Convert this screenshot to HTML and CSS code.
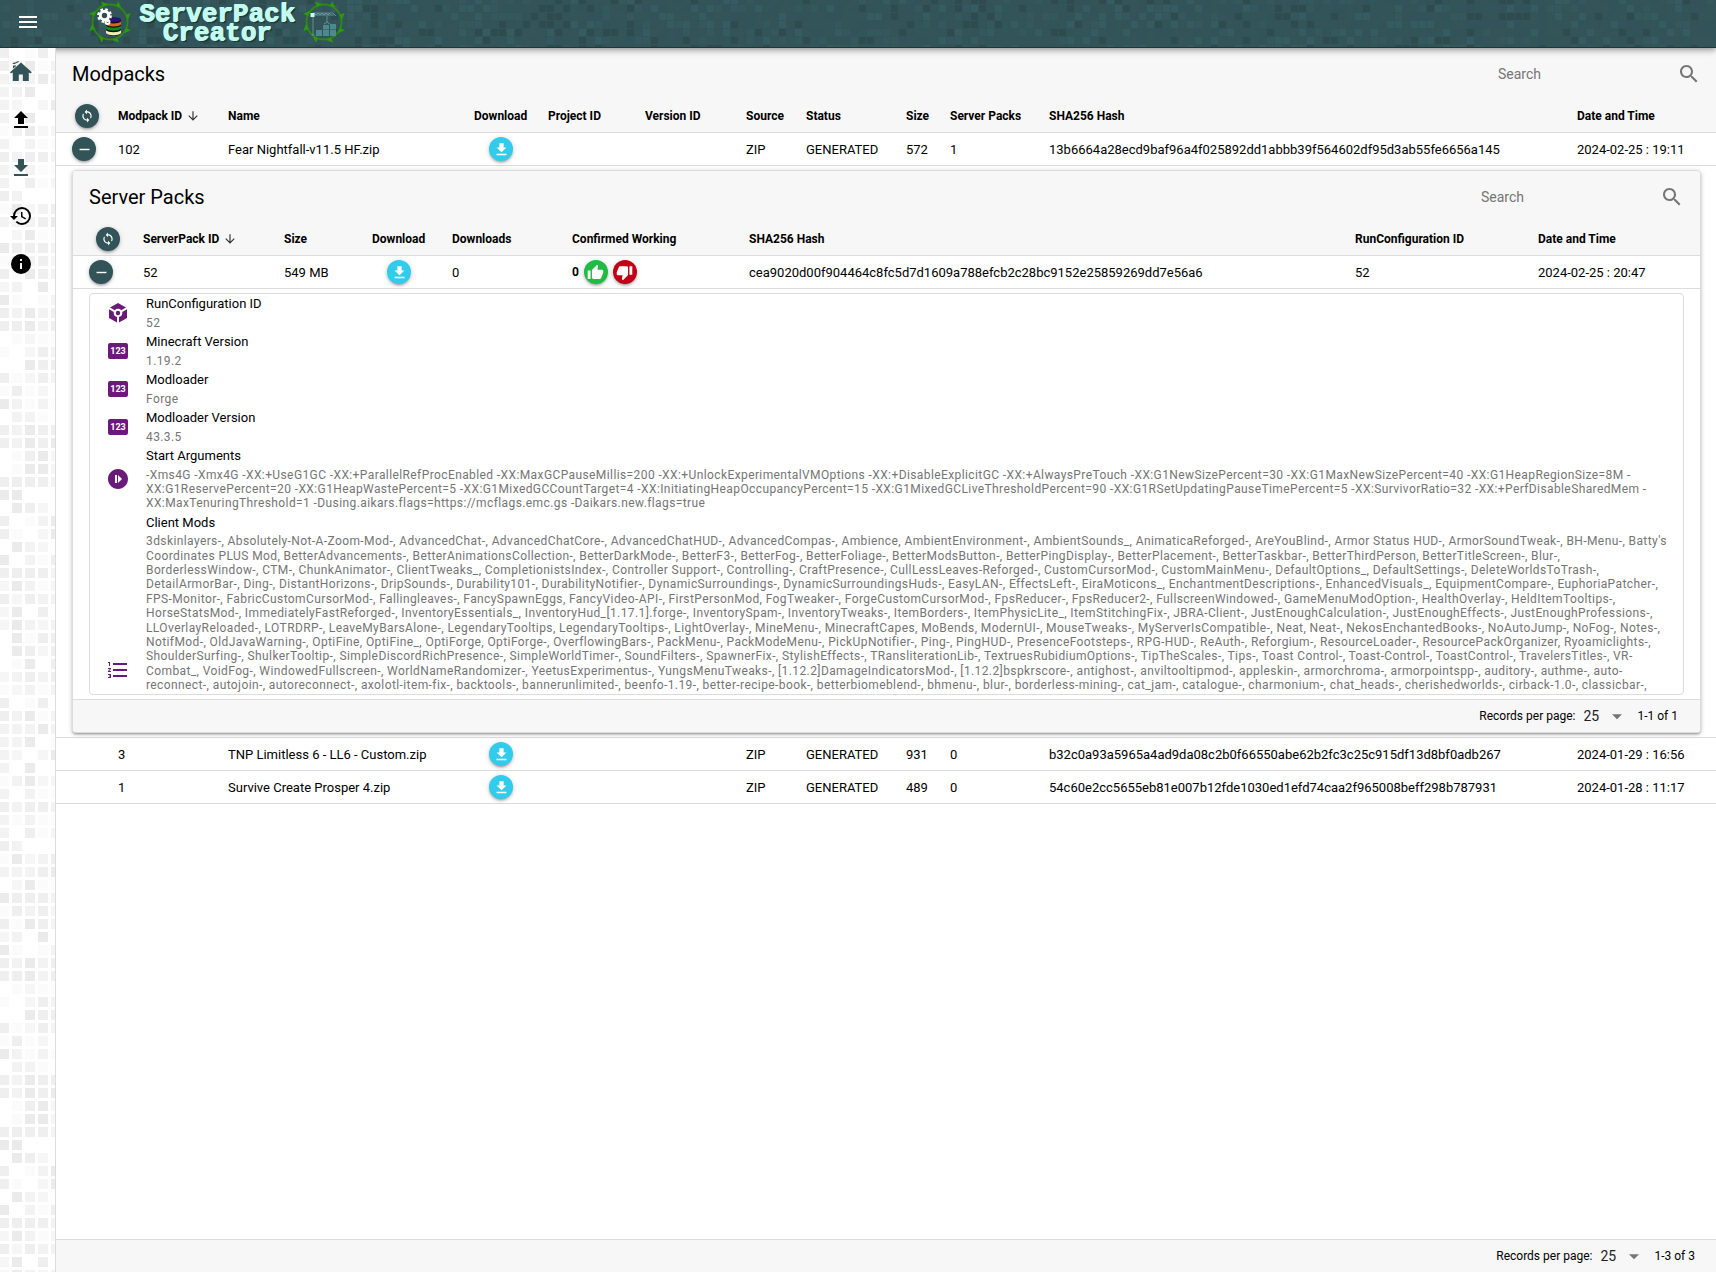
FILE: index.html
```html
<!DOCTYPE html>
<html lang="en">
<head>
<meta charset="utf-8">
<meta name="viewport" content="width=device-width, initial-scale=1">
<title>ServerPackCreator</title>
<link rel="stylesheet" href="styles.css">
<script src="pixels.js" defer></script>
</head>
<body>
<svg class="sprite" aria-hidden="true">
  <symbol id="i-menu" viewBox="0 0 24 24"><path d="M3 18h18v-2H3v2zm0-5h18v-2H3v2zm0-7v2h18V6H3z"/></symbol>
  <symbol id="i-home" viewBox="0 0 24 24"><path d="M12 2.500 1 12.200l1 1.200 1.800-.9V21h6v-6.500h4V21h6v-8.500l1.800.9 1.200-1.200z"/><path d="M4 5.500V8.500l3-2.300V5.500zM3.600 4C4 2.200 5.600 3 7 2.200 8 1.500 9 1 10 1 9.600 3 8 2.600 7 3.200 6 4 4.600 4 3.600 4z"/></symbol>
  <symbol id="i-upload" viewBox="0 0 24 24"><path d="M9 16v-6H5l7-7 7 7h-4v6H9zm-4 4v-2h14v2H5z"/></symbol>
  <symbol id="i-download" viewBox="0 0 24 24"><path d="M19 9h-4V3H9v6H5l7 7 7-7zM5 18v2h14v-2H5z"/></symbol>
  <symbol id="i-history" viewBox="0 0 24 24"><path d="M13.500 8H12v5l4.280 2.540.72-1.210-3.500-2.080V8M13 3a9 9 0 0 0-9 9H1l3.960 4.030L9 12H6a7 7 0 1 1 7 7c-1.930 0-3.680-.79-4.940-2.060l-1.420 1.420A8.900 8.900 0 0 0 13 21a9 9 0 0 0 0-18"/></symbol>
  <symbol id="i-info" viewBox="0 0 24 24"><path d="M12 2a10 10 0 1 0 0 20 10 10 0 0 0 0-20zm1 15h-2v-6h2v6zm0-8h-2V7h2v2z"/></symbol>
  <symbol id="i-sync" viewBox="0 0 24 24"><path d="M12 4V1L8 5l4 4V6c3.310 0 6 2.690 6 6 0 1.010-.25 1.970-.7 2.800l1.460 1.460C19.540 15.030 20 13.570 20 12c0-4.420-3.580-8-8-8zm0 14c-3.310 0-6-2.690-6-6 0-1.010.25-1.970.7-2.800L5.240 7.740C4.460 8.970 4 10.430 4 12c0 4.420 3.580 8 8 8v3l4-4-4-4v3z"/></symbol>
  <symbol id="i-minus" viewBox="0 0 24 24"><path d="M19 13H5v-2h14v2z"/></symbol>
  <symbol id="i-sort" viewBox="0 0 24 24"><path d="M20 12l-1.410-1.410L13 16.170V4h-2v12.170l-5.580-5.590L4 12l8 8 8-8z"/></symbol>
  <symbol id="i-search" viewBox="0 0 24 24"><path d="M15.500 14h-.79l-.28-.27C15.410 12.590 16 11.110 16 9.500 16 5.910 13.090 3 9.500 3S3 5.910 3 9.500 5.910 16 9.500 16c1.610 0 3.090-.59 4.230-1.570l.27.28v.79l5 4.990L20.490 19l-4.990-5zm-6 0C7.010 14 5 11.990 5 9.500S7.010 5 9.500 5 14 7.010 14 9.500 11.990 14 9.500 14z"/></symbol>
  <symbol id="i-up" viewBox="0 0 24 24"><path d="M1 21h4V9H1v12zm22-11c0-1.100-.9-2-2-2h-6.310l.95-4.570.03-.32c0-.41-.17-.79-.44-1.060L14.170 1 7.590 7.590C7.220 7.950 7 8.450 7 9v10c0 1.100.9 2 2 2h9c.83 0 1.540-.5 1.840-1.220l3.020-7.050c.09-.23.14-.47.14-.73v-2z"/></symbol>
  <symbol id="i-down" viewBox="0 0 24 24"><path d="M15 3H6c-.83 0-1.540.5-1.840 1.220l-3.020 7.050c-.09.23-.14.47-.14.73v2c0 1.100.9 2 2 2h6.310l-.95 4.570-.03.32c0 .41.17.79.44 1.060L9.830 23l6.590-6.590c.36-.36.58-.86.58-1.410V5c0-1.100-.9-2-2-2zm4 0v12h4V3h-4z"/></symbol>
  <symbol id="i-cube" viewBox="0 0 24 24"><path d="M12 2 20 6.400 15.200 9.200A4.200 4.200 0 0 0 12 7.800 4.200 4.200 0 0 0 8.800 9.200L4 6.400zM3 8.200 7.800 11A4.200 4.200 0 0 0 11 15.900V21.500L3 17zM21 8.200V17l-8 4.500V15.900A4.200 4.200 0 0 0 16.200 11z"/><circle cx="12" cy="12" r="2.200"/></symbol>
  <symbol id="i-start" viewBox="0 0 24 24"><path d="M12 2C6.480 2 2 6.480 2 12s4.480 10 10 10 10-4.480 10-10S17.520 2 12 2zm-1 14H9V8h2v8zm1 0V8l4 4-4 4z"/></symbol>
  <symbol id="i-list" viewBox="0 0 24 24"><path d="M2 17h2v.5H3v1h1v.5H2v1h3v-4H2v1zm1-9h1V4H2v1h1v3zm-1 3h1.800L2 13.100v.9h3v-1H3.200L5 10.900V10H2v1zm5-6v2h14V5H7zm0 14h14v-2H7v2zm0-6h14v-2H7v2z"/></symbol>
  <symbol id="i-caret" viewBox="0 0 24 24"><path d="M6 10l6 6 6-6z"/></symbol>
  <symbol id="i-ring" viewBox="0 0 44 44">
    <circle cx="22" cy="22" r="17.500" fill="none" stroke="#2c8a10" stroke-width="1.800"/>
    <g fill="#2c9a0c">
      <path d="M15 6.500 13 1.500 20 4z"/>
      <path d="M15 6.500 13 1.500 20 4z" transform="rotate(45 22 22)"/>
      <path d="M15 6.500 13 1.500 20 4z" transform="rotate(90 22 22)"/>
      <path d="M15 6.500 13 1.500 20 4z" transform="rotate(135 22 22)"/>
      <path d="M15 6.500 13 1.500 20 4z" transform="rotate(180 22 22)"/>
      <path d="M15 6.500 13 1.500 20 4z" transform="rotate(225 22 22)"/>
      <path d="M15 6.500 13 1.500 20 4z" transform="rotate(270 22 22)"/>
      <path d="M15 6.500 13 1.500 20 4z" transform="rotate(315 22 22)"/>
    </g>
  </symbol>
</svg>

<header class="topbar">
  <svg class="topbar-pixels" id="header-pixels" aria-hidden="true"></svg>
  <button class="menu-button" type="button" aria-label="Menu"><svg class="icon"><use href="#i-menu"/></svg></button>
  <a class="brand" href="#home">
    <svg class="emblem" viewBox="0 0 44 44" aria-hidden="true">
      <use href="#i-ring"/>
      <path d="M18 20v13c0 3.400 15 3.400 15 0V20z" fill="#111"/>
      <ellipse cx="25.500" cy="19.500" rx="7.500" ry="2.400" fill="#2a1670"/>
      <path d="M18 21.500c2 2.500 13 2.500 15 0v3c-2 2.500-13 2.500-15 0z" fill="#d2691e"/>
      <path d="M18 25.800c2 2.500 13 2.500 15 0v3c-2 2.500-13 2.500-15 0z" fill="#0c8a1c"/>
      <path d="M18 30.300c2 2.500 13 2.500 15 0v3c-2 2.500-13 2.500-15 0z" fill="#f3eeb0"/>
      <circle cx="16.500" cy="15.500" r="4.200" fill="none" stroke="#fff" stroke-width="3"/>
      <circle cx="16.500" cy="15.500" r="6.200" fill="none" stroke="#fff" stroke-width="2.400" stroke-dasharray="2.600 2.270"/>
      <circle cx="19.500" cy="22" r="2" fill="none" stroke="#fff" stroke-width="2"/>
    </svg>
    <span class="brand-name">ServerPack<br>Creator</span>
    <svg class="emblem" viewBox="0 0 44 44" aria-hidden="true">
      <use href="#i-ring"/>
      <path d="M14 30h6v6h-6zM21 30h6v6h-6zM28 30h6v6h-6zM21 25h6v4.500h-6zM28 24h6v5.500h-6z" fill="#4d8a90"/>
      <path d="M11 17V35M9.500 35h3M9 15h23M11 13l20 0 3 3M12 13l2 2 2-2 2 2 2-2 2 2 2-2 2 2 2-2M25 16v6M22 24l3-2 3 2" fill="none" stroke="#6f9fa4" stroke-width=".8"/>
      <path d="M8.500 13h4v4h-4z" fill="#c6fbf0"/>
    </svg>
  </a>
</header>

<div class="layout">
  <aside class="rail">
    <svg class="rail-pixels" id="rail-pixels" aria-hidden="true"></svg>
    <nav class="rail-nav" aria-label="Main">
      <a class="rail-link rail-link-brand" href="#home" aria-label="Home"><svg class="icon"><use href="#i-home"/></svg></a>
      <a class="rail-link" href="#upload" aria-label="Upload"><svg class="icon"><use href="#i-upload"/></svg></a>
      <a class="rail-link rail-link-brand" href="#downloads" aria-label="Downloads"><svg class="icon"><use href="#i-download"/></svg></a>
      <a class="rail-link" href="#history" aria-label="History"><svg class="icon"><use href="#i-history"/></svg></a>
      <a class="rail-link" href="#about" aria-label="About"><svg class="icon"><use href="#i-info"/></svg></a>
    </nav>
  </aside>

  <main class="page">
    <div class="table-top">
      <h1 class="table-title">Modpacks</h1>
      <label class="search"><input class="search-input" type="search" placeholder="Search" aria-label="Search modpacks"><svg class="icon"><use href="#i-search"/></svg></label>
    </div>
    <table class="data-table modpacks">
      <colgroup><col class="m-toggle"><col class="m-id"><col class="m-name"><col class="m-download"><col class="m-project"><col class="m-version"><col class="m-source"><col class="m-status"><col class="m-size"><col class="m-packs"><col><col class="m-date"></colgroup>
      <thead>
        <tr>
          <th class="toggle-cell"><button class="round round-dark" type="button" aria-label="Refresh modpacks"><svg class="icon-small"><use href="#i-sync"/></svg></button></th>
          <th>Modpack ID<svg class="sort"><use href="#i-sort"/></svg></th>
          <th>Name</th><th>Download</th><th>Project ID</th><th>Version ID</th><th>Source</th><th>Status</th><th>Size</th><th>Server Packs</th><th>SHA256 Hash</th><th>Date and Time</th>
        </tr>
      </thead>
      <tbody>
        <tr>
          <td class="toggle-cell"><button class="round round-dark" type="button" aria-label="Collapse modpack 102"><svg class="icon-medium"><use href="#i-minus"/></svg></button></td>
          <td>102</td><td>Fear Nightfall-v11.5 HF.zip</td>
          <td class="download-cell"><button class="round round-info" type="button" aria-label="Download modpack 102"><svg class="icon-medium"><use href="#i-download"/></svg></button></td>
          <td></td><td></td><td>ZIP</td><td>GENERATED</td><td>572</td><td>1</td><td>13b6664a28ecd9baf96a4f025892dd1abbb39f564602df95d3ab55fe6656a145</td><td>2024-02-25 : 19:11</td>
        </tr>
        <tr>
          <td class="nested-cell" colspan="12">
            <section class="card">
              <div class="table-top">
                <h2 class="table-title">Server Packs</h2>
                <label class="search"><input class="search-input" type="search" placeholder="Search" aria-label="Search server packs"><svg class="icon"><use href="#i-search"/></svg></label>
              </div>
              <table class="data-table serverpacks">
                <colgroup><col class="s-toggle"><col class="s-id"><col class="s-size"><col class="s-download"><col class="s-downloads"><col class="s-working"><col><col class="s-config"><col class="s-date"></colgroup>
                <thead>
                  <tr>
                    <th class="toggle-cell"><button class="round round-dark" type="button" aria-label="Refresh server packs"><svg class="icon-small"><use href="#i-sync"/></svg></button></th>
                    <th>ServerPack ID<svg class="sort"><use href="#i-sort"/></svg></th>
                    <th>Size</th><th>Download</th><th>Downloads</th><th>Confirmed Working</th><th>SHA256 Hash</th><th>RunConfiguration ID</th><th>Date and Time</th>
                  </tr>
                </thead>
                <tbody>
                  <tr>
                    <td class="toggle-cell"><button class="round round-dark" type="button" aria-label="Collapse server pack 52"><svg class="icon-medium"><use href="#i-minus"/></svg></button></td>
                    <td>52</td><td>549 MB</td>
                    <td class="download-cell"><button class="round round-info" type="button" aria-label="Download server pack 52"><svg class="icon-medium"><use href="#i-download"/></svg></button></td>
                    <td>0</td>
                    <td><div class="votes"><b class="vote-count">0</b><button class="round round-yes" type="button" aria-label="Works"><svg class="icon-medium"><use href="#i-up"/></svg></button><button class="round round-no" type="button" aria-label="Does not work"><svg class="icon-medium"><use href="#i-down"/></svg></button></div></td>
                    <td>cea9020d00f904464c8fc5d7d1609a788efcb2c28bc9152e25859269dd7e56a6</td><td>52</td><td>2024-02-25 : 20:47</td>
                  </tr>
                  <tr>
                    <td class="nested-cell nested-last" colspan="9">
                      <dl class="details">
                        <div class="detail"><svg class="icon"><use href="#i-cube"/></svg><div class="detail-body"><dt>RunConfiguration ID</dt><dd>52</dd></div></div>
                        <div class="detail"><span class="badge" aria-hidden="true">123</span><div class="detail-body"><dt>Minecraft Version</dt><dd>1.19.2</dd></div></div>
                        <div class="detail"><span class="badge" aria-hidden="true">123</span><div class="detail-body"><dt>Modloader</dt><dd>Forge</dd></div></div>
                        <div class="detail"><span class="badge" aria-hidden="true">123</span><div class="detail-body"><dt>Modloader Version</dt><dd>43.3.5</dd></div></div>
                        <div class="detail"><svg class="icon"><use href="#i-start"/></svg><div class="detail-body"><dt>Start Arguments</dt><dd>-Xms4G -Xmx4G -XX:+UseG1GC -XX:+ParallelRefProcEnabled -XX:MaxGCPauseMillis=200 -XX:+UnlockExperimentalVMOptions -XX:+DisableExplicitGC -XX:+AlwaysPreTouch -XX:G1NewSizePercent=30 -XX:G1MaxNewSizePercent=40 -XX:G1HeapRegionSize=8M -XX:G1ReservePercent=20 -XX:G1HeapWastePercent=5 -XX:G1MixedGCCountTarget=4 -XX:InitiatingHeapOccupancyPercent=15 -XX:G1MixedGCLiveThresholdPercent=90 -XX:G1RSetUpdatingPauseTimePercent=5 -XX:SurvivorRatio=32 -XX:+PerfDisableSharedMem -XX:MaxTenuringThreshold=1 -Dusing.aikars.flags=https://mcflags.emc.gs -Daikars.new.flags=true</dd></div></div>
                        <div class="detail"><svg class="icon"><use href="#i-list"/></svg><div class="detail-body"><dt>Client Mods</dt><dd class="mod-list">3dskinlayers-, Absolutely-Not-A-Zoom-Mod-, AdvancedChat-, AdvancedChatCore-, AdvancedChatHUD-, AdvancedCompas-, Ambience, AmbientEnvironment-, AmbientSounds_, AnimaticaReforged-, AreYouBlind-, Armor Status HUD-, ArmorSoundTweak-, BH-Menu-, Batty's Coordinates PLUS Mod, BetterAdvancements-, BetterAnimationsCollection-, BetterDarkMode-, BetterF3-, BetterFog-, BetterFoliage-, BetterModsButton-, BetterPingDisplay-, BetterPlacement-, BetterTaskbar-, BetterThirdPerson, BetterTitleScreen-, Blur-, BorderlessWindow-, CTM-, ChunkAnimator-, ClientTweaks_, CompletionistsIndex-, Controller Support-, Controlling-, CraftPresence-, CullLessLeaves-Reforged-, CustomCursorMod-, CustomMainMenu-, DefaultOptions_, DefaultSettings-, DeleteWorldsToTrash-, DetailArmorBar-, Ding-, DistantHorizons-, DripSounds-, Durability101-, DurabilityNotifier-, DynamicSurroundings-, DynamicSurroundingsHuds-, EasyLAN-, EffectsLeft-, EiraMoticons_, EnchantmentDescriptions-, EnhancedVisuals_, EquipmentCompare-, EuphoriaPatcher-, FPS-Monitor-, FabricCustomCursorMod-, Fallingleaves-, FancySpawnEggs, FancyVideo-API-, FirstPersonMod, FogTweaker-, ForgeCustomCursorMod-, FpsReducer-, FpsReducer2-, FullscreenWindowed-, GameMenuModOption-, HealthOverlay-, HeldItemTooltips-, HorseStatsMod-, ImmediatelyFastReforged-, InventoryEssentials_, InventoryHud_[1.17.1].forge-, InventorySpam-, InventoryTweaks-, ItemBorders-, ItemPhysicLite_, ItemStitchingFix-, JBRA-Client-, JustEnoughCalculation-, JustEnoughEffects-, JustEnoughProfessions-, LLOverlayReloaded-, LOTRDRP-, LeaveMyBarsAlone-, LegendaryTooltips, LegendaryTooltips-, LightOverlay-, MineMenu-, MinecraftCapes, MoBends, ModernUI-, MouseTweaks-, MyServerIsCompatible-, Neat, Neat-, NekosEnchantedBooks-, NoAutoJump-, NoFog-, Notes-, NotifMod-, OldJavaWarning-, OptiFine, OptiFine_, OptiForge, OptiForge-, OverflowingBars-, PackMenu-, PackModeMenu-, PickUpNotifier-, Ping-, PingHUD-, PresenceFootsteps-, RPG-HUD-, ReAuth-, Reforgium-, ResourceLoader-, ResourcePackOrganizer, Ryoamiclights-, ShoulderSurfing-, ShulkerTooltip-, SimpleDiscordRichPresence-, SimpleWorldTimer-, SoundFilters-, SpawnerFix-, StylishEffects-, TRansliterationLib-, TextruesRubidiumOptions-, TipTheScales-, Tips-, Toast Control-, Toast-Control-, ToastControl-, TravelersTitles-, VR-Combat_, VoidFog-, WindowedFullscreen-, WorldNameRandomizer-, YeetusExperimentus-, YungsMenuTweaks-, [1.12.2]DamageIndicatorsMod-, [1.12.2]bspkrscore-, antighost-, anviltooltipmod-, appleskin-, armorchroma-, armorpointspp-, auditory-, authme-, auto-reconnect-, autojoin-, autoreconnect-, axolotl-item-fix-, backtools-, bannerunlimited-, beenfo-1.19-, better-recipe-book-, betterbiomeblend-, bhmenu-, blur-, borderless-mining-, cat_jam-, catalogue-, charmonium-, chat_heads-, cherishedworlds-, cirback-1.0-, classicbar-,</dd></div></div>
                      </dl>
                    </td>
                  </tr>
                </tbody>
              </table>
              <div class="table-bottom">
                <label class="per-page">Records per page:<span class="select-wrap"><select class="select"><option>25</option><option>50</option></select><svg class="caret"><use href="#i-caret"/></svg></span></label>
                <span>1-1 of 1</span>
              </div>
            </section>
          </td>
        </tr>
        <tr>
          <td></td><td>3</td><td>TNP Limitless 6 - LL6 - Custom.zip</td>
          <td class="download-cell"><button class="round round-info" type="button" aria-label="Download modpack 3"><svg class="icon-medium"><use href="#i-download"/></svg></button></td>
          <td></td><td></td><td>ZIP</td><td>GENERATED</td><td>931</td><td>0</td><td>b32c0a93a5965a4ad9da08c2b0f66550abe62b2fc3c25c915df13d8bf0adb267</td><td>2024-01-29 : 16:56</td>
        </tr>
        <tr>
          <td></td><td>1</td><td>Survive Create Prosper 4.zip</td>
          <td class="download-cell"><button class="round round-info" type="button" aria-label="Download modpack 1"><svg class="icon-medium"><use href="#i-download"/></svg></button></td>
          <td></td><td></td><td>ZIP</td><td>GENERATED</td><td>489</td><td>0</td><td>54c60e2cc5655eb81e007b12fde1030ed1efd74caa2f965008beff298b787931</td><td>2024-01-28 : 11:17</td>
        </tr>
      </tbody>
    </table>
    <div class="table-bottom page-bottom">
      <label class="per-page">Records per page:<span class="select-wrap"><select class="select"><option>25</option><option>50</option></select><svg class="caret"><use href="#i-caret"/></svg></span></label>
      <span>1-3 of 3</span>
    </div>
  </main>
</div>
</body>
</html>
```
FILE: styles.css
```css
:root {
  --primary: #325358;
  --accent: #6a1b7a;
  --line: #dcdcdc;
  --panel: #f7f7f7;
}

* { box-sizing: border-box; }

body {
  margin: 0;
  min-height: 100vh;
  display: flex;
  flex-direction: column;
  font-family: Roboto, "Liberation Sans", sans-serif;
  font-size: 13px;
  color: #000;
  background: #fff;
}

button, input, select { font: inherit; }

.sprite { position: absolute; width: 0; height: 0; }

.icon { width: 24px; height: 24px; flex: none; fill: currentColor; display: block; }
.icon-small { width: 14px; height: 14px; fill: currentColor; display: block; }
.icon-medium { width: 17px; height: 17px; fill: currentColor; display: block; }

/* Top bar */
.topbar {
  position: relative;
  z-index: 1;
  height: 48px;
  display: flex;
  align-items: center;
  gap: 48px;
  padding: 0 16px 4px;
  background: var(--primary);
  border-bottom: 1px solid #20363c;
  color: #fff;
  box-shadow: 0 2px 4px -1px rgba(0, 0, 0, .2), 0 4px 5px rgba(0, 0, 0, .14), 0 1px 10px rgba(0, 0, 0, .12);
}
.topbar-pixels { position: absolute; inset: 0; width: 100%; height: 100%; }
.menu-button { position: relative; border: 0; padding: 0; background: none; color: inherit; }
.brand { position: relative; display: flex; align-items: center; gap: 5px; color: #c2fdf0; text-decoration: none; }
.emblem { width: 44px; height: 44px; display: block; }
.brand-name {
  width: 160px;
  padding-top: 4px;
  font: bold 26px/19px "Liberation Mono", monospace;
  text-align: center;
  text-shadow: 1px 0 #c2fdf0, 0 1px #c2fdf0, 2px 2px 1px #16383a;
}

/* Layout */
.layout { flex: 1; display: flex; }
.rail {
  position: relative;
  z-index: 2;
  flex: none;
  width: 56px;
  background: #fff;
  border-right: 1px solid var(--line);
}
.rail-pixels { position: absolute; inset: 0; width: 100%; height: 100%; }
.rail-nav { position: relative; display: flex; flex-direction: column; }
.rail-link { height: 48px; display: flex; align-items: center; padding-left: 9px; color: #000; }
.rail-link-brand { color: var(--primary); }

.page { flex: 1; min-width: 0; display: flex; flex-direction: column; }

/* Tables */
.table-top {
  height: 52px;
  display: flex;
  align-items: center;
  justify-content: space-between;
  padding: 0 15px 0 16px;
  background: var(--panel);
}
.card .table-top { padding-right: 16px; }
.table-title { margin: 0; font-size: 20px; font-weight: 400; line-height: 32px; }
.search { display: flex; align-items: center; width: 203px; color: #757575; }
.search-input { flex: 1; min-width: 0; padding: 0; border: 0; outline: 0; background: none; font-size: 14px; }
.search-input::placeholder { color: #757575; opacity: 1; }

.data-table { width: 100%; table-layout: fixed; border-collapse: separate; border-spacing: 0; }
.data-table th, .data-table td {
  height: 33px;
  padding: 0 8px;
  border-bottom: 1px solid var(--line);
  text-align: left;
  white-space: nowrap;
}
.data-table th { background: var(--panel); font-size: 12px; font-weight: 700; }
.data-table .toggle-cell { padding-left: 16px; }
.data-table th.toggle-cell .round { margin: 0 auto; }
.data-table .download-cell { padding-left: 23px; }
.data-table .nested-cell { height: auto; padding: 4px 15px 4px 16px; white-space: normal; }
.data-table .nested-last { padding-right: 16px; border-bottom: 0; }

.m-toggle { width: 54px; }
.m-id { width: 110px; }
.m-name { width: 246px; }
.m-download { width: 74px; }
.m-project { width: 97px; }
.m-version { width: 101px; }
.m-source { width: 60px; }
.m-status { width: 100px; }
.m-size { width: 44px; }
.m-packs { width: 99px; }
.m-date { width: 147px; }

.s-toggle { width: 62px; }
.s-id { width: 141px; }
.s-size { width: 88px; }
.s-download { width: 80px; }
.s-downloads { width: 120px; }
.s-working { width: 177px; }
.s-config { width: 183px; }
.s-date { width: 170px; }

.sort { width: 14px; height: 14px; margin-left: 4px; vertical-align: -3px; fill: #333; }

.round {
  width: 24px;
  height: 24px;
  display: flex;
  align-items: center;
  justify-content: center;
  padding: 0;
  border: 0;
  border-radius: 50%;
  color: #fff;
  box-shadow: 0 1px 5px rgba(0, 0, 0, .2), 0 2px 2px rgba(0, 0, 0, .14), 0 3px 1px -2px rgba(0, 0, 0, .12);
}
.round-dark { background: var(--primary); }
.round-info { background: #31ccec; }
.round-yes { background: #21ba45; }
.round-no { background: #c10015; }

.votes { display: flex; align-items: center; gap: 5px; }
.vote-count { font-size: 12px; }

.card {
  border: 1px solid var(--line);
  border-radius: 4px;
  overflow: hidden;
  background: #fff;
  box-shadow: 0 1px 5px rgba(0, 0, 0, .2), 0 2px 2px rgba(0, 0, 0, .14), 0 3px 1px -2px rgba(0, 0, 0, .12);
}

/* Run configuration details */
.details {
  height: 402px;
  margin: 0;
  overflow: auto;
  scrollbar-width: none;
  border: 1px solid var(--line);
  border-radius: 4px;
}
.detail { display: flex; align-items: center; gap: 16px; padding: 2px 12px 2px 16px; color: var(--accent); }
.detail-body { flex: 1; min-width: 0; }
.detail dt { line-height: 1.2; color: #000; }
.detail dd { margin: 4px 0 0; font-size: 12px; line-height: 1.2; letter-spacing: .03333em; color: #757575; }
.detail .mod-list { min-height: 290px; }
.badge {
  flex: none;
  width: 20px;
  height: 16px;
  margin: 0 2px;
  border-radius: 2px;
  background: var(--accent);
  color: #fff;
  font-size: 9px;
  font-weight: 700;
  line-height: 16px;
  text-align: center;
}

/* Pagination */
.table-bottom {
  height: 33px;
  display: flex;
  align-items: center;
  justify-content: flex-end;
  gap: 10px;
  padding: 0 21px;
  border-top: 1px solid var(--line);
  background: var(--panel);
  font-size: 12px;
}
.card .table-bottom { padding-right: 22px; }
.page-bottom { margin-top: auto; }
.per-page { display: flex; align-items: center; gap: 8px; }
.select-wrap { display: flex; align-items: center; }
.select {
  width: 44px;
  margin-right: -20px;
  padding: 0;
  border: 0;
  background: none;
  appearance: none;
  font-size: 14px;
  color: #222;
}
.caret { width: 20px; height: 20px; fill: #757575; pointer-events: none; }
```
FILE: pixels.js
```js
// Pixel-mosaic backgrounds for the side rail and the top bar.
const NS = "http://www.w3.org/2000/svg";

function square(svg, x, y, size, fill) {
  const r = document.createElementNS(NS, "rect");
  r.setAttribute("x", x);
  r.setAttribute("y", y);
  r.setAttribute("width", size);
  r.setAttribute("height", size);
  r.setAttribute("fill", fill);
  svg.appendChild(r);
}

// Each string is one row of the tile; a digit is the shade of a square.
const railTile = (
  "40140 43513 33353 33501 32025 30500 13522 30311 43443 31311 30412 43000 15234 " +
  "33345 02511 54443 14342 41543 23050 51013 43534 44534 01211 10243 00544 41243 " +
  "14120 53131 03310 43544 43545 01452 01552 44443 55000 05420 40135 41025 05320 " +
  "50314 44443 25312 42433 25040 25323 05144 05424 01504 23434 12313"
).split(" ");
const railShades = ["", "#fbfbfb", "#f6f6f6", "#f3f3f3", "#efefef", "#ebebeb"];
const rail = document.getElementById("rail-pixels");
for (let row = 0; row * 13 < rail.clientHeight; row++) {
  [...railTile[row % railTile.length]].forEach((shade, col) => {
    if (shade !== "0") square(rail, col * 13 - 1, row * 13, 10, railShades[shade]);
  });
}

const header = document.getElementById("header-pixels");
const headerShades = ["#2e4c50", "#315559", "#325359", "#34585d", "#325359", "#365b60", "#335559", "#33555a"];
let seed = 7;
for (let x = -5; x < header.clientWidth; x += 8) {
  for (let y = -3; y < 48; y += 8) {
    seed = (seed * 1103515245 + 12345) % 2147483648;
    square(header, x, y, 7, headerShades[Math.floor(seed / 65536) % headerShades.length]);
  }
}
```
